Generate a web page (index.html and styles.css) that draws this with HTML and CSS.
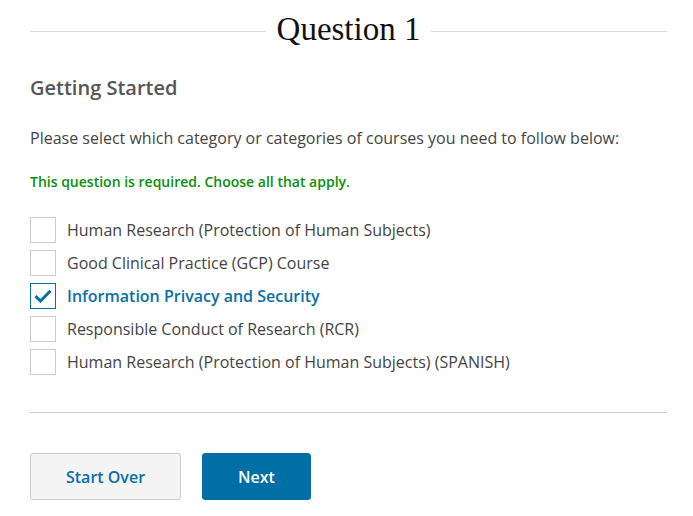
FILE: index.html
```html
<!DOCTYPE html>
<html>
<head>
<meta charset="utf-8">
<link rel="stylesheet" href="styles.css">
</head>
<body>
<div class="page">
  <h1 class="title"><span class="rule"></span><span class="title-text">Question 1</span><span class="rule"></span></h1>
  <h2 class="section">Getting Started</h2>
  <p class="prompt">Please select which category or categories of courses you need to follow below:</p>
  <p class="required">This question is required. Choose all that apply.</p>
  <ul class="options">
    <li class="option"><span class="box"></span><span class="label">Human Research (Protection of Human Subjects)</span></li>
    <li class="option"><span class="box"></span><span class="label">Good Clinical Practice (GCP) Course</span></li>
    <li class="option checked"><span class="box"><svg width="18" height="14" viewBox="0 0 18 14"><path d="M1.5 7.2 L6.5 12 L16.5 1.8" fill="none" stroke="#0a6fa6" stroke-width="3" stroke-linecap="butt" stroke-linejoin="miter"/></svg></span><span class="label">Information Privacy and Security</span></li>
    <li class="option"><span class="box"></span><span class="label">Responsible Conduct of Research (RCR)</span></li>
    <li class="option"><span class="box"></span><span class="label">Human Research (Protection of Human Subjects) (SPANISH)</span></li>
  </ul>
  <hr class="divider">
  <div class="actions">
    <button class="btn btn-secondary">Start Over</button>
    <button class="btn btn-primary">Next</button>
  </div>
</div>
</body>
</html>
```
FILE: styles.css
```css
html, body {
  margin: 0;
  padding: 0;
  background: #fff;
}
.page {
  width: 637px;
  margin-left: 30px;
  padding-top: 9px;
  font-family: "Open Sans", "Liberation Sans", sans-serif;
  color: #444;
}
.title {
  display: flex;
  align-items: center;
  gap: 11px;
  margin: 0;
  font-family: "Liberation Serif", serif;
  font-weight: normal;
  font-size: 33px;
  line-height: 40px;
  color: #111;
}
.rule {
  flex: 1;
  height: 1px;
  background: #d9d9d9;
  margin-top: 4px;
}
.section {
  margin: 25px 0 0;
  font-size: 20px;
  line-height: 28px;
  font-weight: 600;
  color: #555;
}
.prompt {
  margin: 24px 0 0;
  font-size: 16px;
  line-height: 24px;
  color: #444;
}
.required {
  margin: 22px 0 0;
  font-size: 14px;
  line-height: 20px;
  font-weight: 600;
  color: #0a8f0a;
}
.options {
  list-style: none;
  margin: 25px 0 0;
  padding: 0;
  display: flex;
  flex-direction: column;
  gap: 7px;
}
.option {
  display: flex;
  align-items: center;
  gap: 11px;
  height: 26px;
  font-size: 16px;
}
.box {
  box-sizing: border-box;
  width: 26px;
  height: 26px;
  border: 1px solid #ccc;
  background: #fff;
  display: flex;
  align-items: center;
  justify-content: center;
  flex: none;
}
.checked .box {
  border-color: #0a6fa6;
}
.checked .label {
  color: #0a6fa6;
  font-weight: 600;
}
.divider {
  border: 0;
  height: 1px;
  background: #ccc;
  margin: 37px 0 0;
}
.actions {
  display: flex;
  gap: 21px;
  margin-top: 40px;
}
.btn {
  box-sizing: border-box;
  height: 47px;
  border-radius: 3px;
  font-family: "Open Sans", "Liberation Sans", sans-serif;
  font-size: 16px;
  font-weight: 600;
  cursor: pointer;
}
.btn-secondary {
  width: 151px;
  background: #f4f4f4;
  border: 1px solid #ccc;
  color: #0a6fa6;
}
.btn-primary {
  width: 109px;
  background: #006fa6;
  border: 1px solid #006fa6;
  color: #fff;
}
```
